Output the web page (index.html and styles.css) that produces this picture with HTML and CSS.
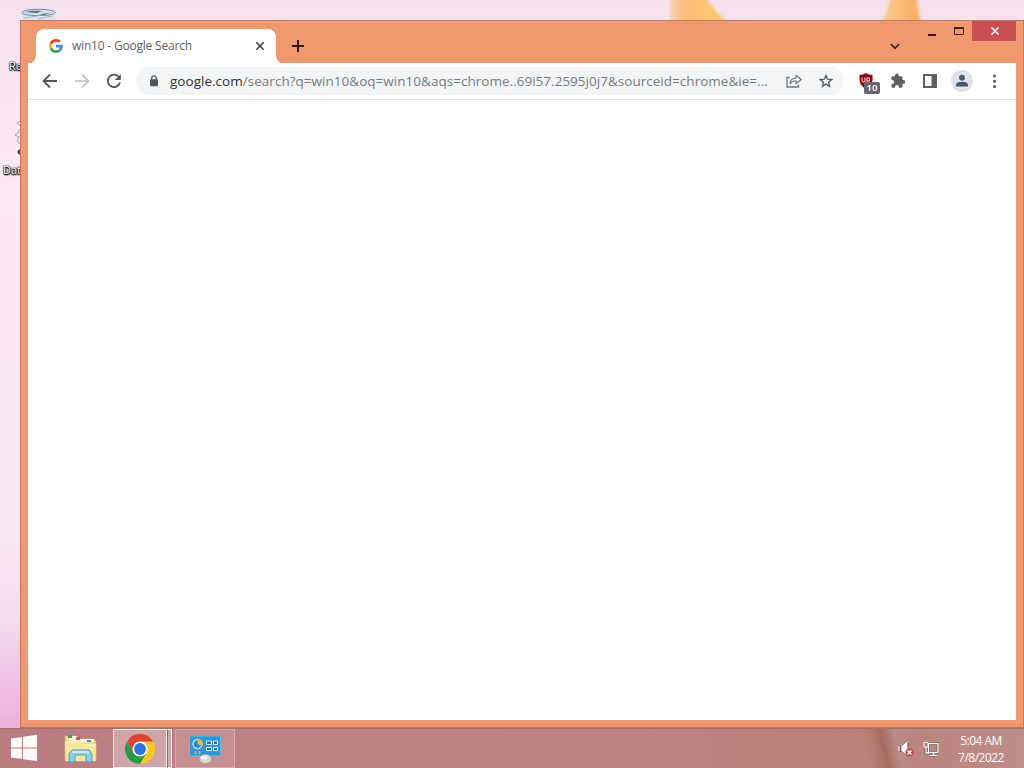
FILE: index.html
```html
<!DOCTYPE html>
<html lang="en">
<head>
<meta charset="utf-8">
<title>Desktop</title>
<link rel="stylesheet" href="styles.css">
</head>
<body>
<div class="desktop">
  <svg class="wallpaper" width="1024" height="768" viewBox="0 0 1024 768">
    <defs>
      <linearGradient id="petal" x1="0" x2="1"><stop offset="0" stop-color="#fbcfc0"/><stop offset=".25" stop-color="#fbbd7a"/><stop offset="1" stop-color="#fccb6c"/></linearGradient>
      <linearGradient id="petal2" x1="0" x2="1"><stop offset="0" stop-color="#fbcf98"/><stop offset="1" stop-color="#fba95e"/></linearGradient>
      <filter id="soft"><feGaussianBlur stdDeviation="1.5"/></filter>
    </defs>
    <g filter="url(#soft)"><path d="M670-5H704Q712 8 729 24H670Z" fill="url(#petal)"/><path d="M890-5H916Q918 10 921 24H880Q890 8 890-5Z" fill="url(#petal2)"/></g>
  </svg>
  <svg class="bin" width="38" height="14" viewBox="0 0 38 14"><path d="M1 4L3 14H33L36 4Z" fill="#dce5ee"/><ellipse cx="18.500" cy="4.500" rx="17" ry="3.200" fill="#d3e0ea" stroke="#7b8b9b"/><path d="M5 4Q15 2 22 3L17 5ZM19 6Q27 6 33 4L24 7Z" fill="#52677d"/><path d="M4 10L17 8M18 11L32 8" stroke="#9fb2c4"/></svg>
  <span class="label label-bin">Recycle Bin</span>
  <svg class="shortcut" width="8" height="36" viewBox="0 0 8 36"><path d="M6 1L3 3L6 6M6 9L4 13L1 15L5 17L3 21L6 24" fill="none" stroke="#aaa0aa"/><path d="M6 30Q3 32 6 34" fill="none" stroke="#333" stroke-width="2"/></svg>
  <span class="label label-data">Data</span>

  <main class="window">
    <header class="titlebar">
      <div class="tab">
        <svg width="14" height="14" viewBox="0 0 48 48"><path fill="#ea4335" d="M24 9.500c3.500 0 6.700 1.200 9.200 3.600l6.900-6.900C35.900 2.400 30.500 0 24 0 14.600 0 6.500 5.400 2.600 13.200l8 6.200C12.400 13.700 17.700 9.500 24 9.500z"/><path fill="#4285f4" d="M47 24.500c0-1.600-.2-3.100-.4-4.500H24v9h12.900c-.6 3-2.300 5.500-4.800 7.200l7.700 6C44.400 38 47 31.800 47 24.500z"/><path fill="#fbbc05" d="M10.500 28.600a14.500 14.500 0 010-9.200l-8-6.200a24 24 0 000 21.600z"/><path fill="#34a853" d="M24 48c6.500 0 11.900-2.100 15.900-5.800l-7.700-6c-2.200 1.500-4.900 2.300-8.200 2.300-6.300 0-11.600-4.200-13.500-9.900l-8 6.200C6.500 42.600 14.600 48 24 48z"/></svg>
        <span class="tab-title">win10 - Google Search</span>
        <svg width="10" height="10" viewBox="0 0 10 10"><path d="M1.300 1.300L8.700 8.700M8.700 1.300L1.300 8.700" stroke="#3c4043" stroke-width="1.500"/></svg>
      </div>
      <svg class="new-tab" width="12" height="12" viewBox="0 0 12 12"><path d="M6 0V12M0 6H12" stroke="#35150d" stroke-width="2"/></svg>
      <svg class="tab-menu" width="10" height="7" viewBox="0 0 10 7"><path d="M.8 1L5 5.200L9.200 1" fill="none" stroke="#4a1d10" stroke-width="1.700"/></svg>
      <div class="controls">
        <svg width="8" height="2"><path d="M0 0H8V2H0Z" fill="#35150d"/></svg>
        <svg class="maximize" width="10" height="8"><path d="M.5 1H9.500V7.500H.5Z" fill="none" stroke="#45200f"/><path d="M0 1H10" stroke="#45200f" stroke-width="2"/></svg>
        <div class="close"><svg width="8" height="8" viewBox="0 0 8 8"><path d="M.5.5L7.500 7.500M7.500.5L.5 7.500" stroke="#fff" stroke-width="1.500"/></svg></div>
      </div>
    </header>
    <section class="page">
      <nav class="toolbar">
        <svg class="tool" viewBox="0 0 16 16"><path d="M15 8H2M8 1.500L1.500 8L8 14.500" fill="none" stroke="#55585c" stroke-width="1.800"/></svg>
        <svg class="tool" viewBox="0 0 16 16"><path d="M1 8H14M8 1.500L14.500 8L8 14.500" fill="none" stroke="#bbbdbf" stroke-width="1.700"/></svg>
        <svg class="tool" viewBox="0 0 16 16"><path d="M13.300 4.600A6.200 6.200 0 1014 9.500" fill="none" stroke="#55585c" stroke-width="1.800"/><path d="M14.800 1V7H8.800Z" fill="#55585c"/></svg>
        <div class="omnibox">
          <svg class="lock" width="10" height="12" viewBox="0 0 10 12"><path d="M2.700 5V3.200a2.300 2.300 0 014.600 0V5" fill="none" stroke="#55585c" stroke-width="1.300"/><rect x="1" y="4.300" width="8" height="7" rx="1" fill="#55585c"/></svg>
          <span class="url"><b>google.com</b>/search?q=win10&amp;oq=win10&amp;aqs=chrome..69i57.2595j0j7&amp;sourceid=chrome&amp;ie=...</span>
          <svg class="share" width="16" height="14" viewBox="0 0 16 14"><path d="M3.500 3.500H1V13H12.500V10.500" fill="none" stroke="#74777b" stroke-width="1.300"/><path d="M4 9.500Q4.500 4.300 10 4V1.200L15.200 5.500L10 9.500V6.800Q6.500 6.500 4 9.500Z" fill="none" stroke="#74777b" stroke-width="1.200" stroke-linejoin="round"/></svg>
          <svg class="star" width="14" height="14" viewBox="0 0 14 14"><path d="M7 1.400L8.600 5.200L12.800 5.600L9.600 8.300L10.600 12.300L7 10.100L3.400 12.300L4.400 8.300L1.200 5.600L5.400 5.200Z" fill="none" stroke="#55585c" stroke-width="1.300"/></svg>
        </div>
        <div class="extension">
          <svg width="16" height="16" viewBox="0 0 16 16"><path d="M8 0Q11 2 14.500 2V7Q14 13 8 16Q2 13 1.500 7V2Q5 2 8 0Z" fill="#8d0713"/><path d="M4 4.500V8Q5.500 10 7 8V4.500M9 10V5H11.500V8H9" fill="none" stroke="#f5caca" stroke-width="1.100"/></svg>
          <span class="badge">10</span>
        </div>
        <svg class="tool" viewBox="0 0 16 16"><path d="M1.500 4.500Q1.500 3.200 2.800 3.200H5V2.400a1.900 1.900 0 013.800 0V3.200H11Q12.500 3.200 12.500 4.500V7H13.300a1.900 1.900 0 010 3.800H12.500V13.500Q12.500 14.800 11 14.800H9V14a2 2 0 00-4 0V14.800H2.800Q1.500 14.800 1.500 13.500V11H2.100a2 2 0 000-4H1.500Z" fill="#5d6064"/></svg>
        <svg class="tool" viewBox="0 0 16 16"><path d="M1 1H15V15H1ZM3 3V13H9.500V3Z" fill="#5d6064" fill-rule="evenodd"/></svg>
        <svg class="avatar" width="22" height="22" viewBox="0 0 22 22"><circle cx="11" cy="11" r="11" fill="#dfe2ea"/><circle cx="11" cy="7.700" r="2.900" fill="#51576a"/><path d="M5 16.500V14.800Q5 11.800 11 11.800T17 14.800V16.500Z" fill="#51576a"/></svg>
        <svg class="tool" viewBox="0 0 16 16"><g fill="#55585c"><circle cx="8.500" cy="3" r="1.500"/><circle cx="8.500" cy="8.200" r="1.500"/><circle cx="8.500" cy="13.400" r="1.500"/></g></svg>
      </nav>
    </section>
  </main>

  <footer class="taskbar">
    <svg class="start" width="28" height="28" viewBox="0 0 28 28"><path d="M1 4.500L12 3V13.500H1ZM13 2.800L27 .8V13.500H13ZM1 14.500H12V25L1 23.500ZM13 14.500H27V27L13 25.200Z" fill="#fffafa"/></svg>
    <svg class="folder" width="34" height="30" viewBox="0 0 34 30"><path d="M1 2H11L13 5H30L32 8V27H1Z" fill="#ecdc8c" stroke="#cfb969" stroke-width=".7"/><path d="M5 2H13L15 5H30V8H5Z" fill="#fff9dc"/><path d="M4 1h4v3H4z" fill="#4b9e5a"/><path d="M12 3h4v3h-4z" fill="#d15145"/><path d="M23 6h4v2h-4z" fill="#498ecc"/><path d="M1 7H18L21 10H32L31 27H2Z" fill="#f6e89b"/><path d="M2 8H17L20 11H32" fill="none" stroke="#fff8cd"/><path d="M5 28V20L8 16H25L28 20V28H22V21H11V28Z" fill="#8ccfea" stroke="#509fc5"/><path d="M8 18H25" stroke="#e1f6fb" stroke-width="1.500"/></svg>
    <div class="task task-active">
      <svg width="30" height="30" viewBox="0 0 30 30"><circle cx="15" cy="15" r="15" fill="#fcc629"/><path d="M2 7.500A15 15 0 0015 30L21.500 18.750L8.500 18.750Z" fill="#28994d"/><path d="M2 7.500A15 15 0 0128 7.500H15L8.500 18.750Z" fill="#dc4437"/><circle cx="15" cy="15" r="7.600" fill="#fff"/><circle cx="15" cy="15" r="5.900" fill="#2c72dd"/></svg>
    </div>
    <div class="stack"></div>
    <div class="task task-panel">
      <svg width="34" height="30" viewBox="0 0 34 30"><rect x="1.500" y="2" width="31" height="20" rx="1" fill="#3395d3" stroke="#68b9df"/><circle cx="9.500" cy="10" r="4.500" fill="#2588ca" stroke="#b8e2f2" stroke-width="1.400"/><path d="M9.500 10V4.500A5.500 5.500 0 0114 12Z" fill="#f0b748"/><path d="M18.500 7H23.500V10.500H18.500ZM25.500 7H29.500V10.500H25.500ZM18.500 13.500H23.500V16.500H18.500ZM25.500 13.500H29.500V16.500H25.500Z" fill="#2876b5" stroke="#d6edf5"/><path d="M7.500 17v3M11.500 17v3" stroke="#78c98e" stroke-width="2"/><ellipse cx="17.500" cy="25" rx="6" ry="4.500" fill="#d8d7d0" stroke="#a5a29e" stroke-width=".7"/><ellipse cx="16" cy="23.500" rx="3.500" ry="2" fill="#f5f4ee"/></svg>
    </div>
    <div class="tray">
      <svg width="16" height="16" viewBox="0 0 16 16"><path d="M1 5V10M4 5H5L9 1V14L5 10H4Z" fill="#fff" stroke="#fff"/><path d="M2.500 4V11M10 2V6" stroke="#704946"/><circle cx="11.500" cy="11.500" r="4.200" fill="#c34855"/><path d="M9.500 9.500L13.500 13.500M13.500 9.500L9.500 13.500" stroke="#fff" stroke-width="1.400"/></svg>
      <svg width="16" height="16" viewBox="0 0 16 16"><path d="M5.500 2.500H15V11.500H5.500ZM10.500 12V14.500M6 14.500H14M3 6V12H6" fill="none" stroke="#6f4c48" stroke-width="2.800"/><path d="M5.500 2.500H15V11.500H5.500ZM10.500 12V14.500M6 14.500H14M3 6V12H6" fill="none" stroke="#fff" stroke-width="1.300"/><path d="M1 1.500H5V6H1Z" fill="#a17874" stroke="#fff"/></svg>
      <div class="clock"><span>5:04 AM</span><span class="date">7/8/2022</span></div>
    </div>
  </footer>
</div>
</body>
</html>
```

FILE: styles.css
```css
* { box-sizing: border-box; }
body { margin: 0; font-family: "Open Sans", "Noto Sans", sans-serif; }
svg { display: block; flex: none; }
.desktop { position: relative; width: 1024px; height: 768px; overflow: hidden; background: linear-gradient(#f6e2ee 0, #fbe9f5 160px, #f8e8f3 540px, #f4dcee 620px, #edb2dc 720px); }
.wallpaper { position: absolute; inset: 0; }
.bin { position: absolute; left: 20px; top: 8px; }
.shortcut { position: absolute; left: 14px; top: 120px; }
.label { position: absolute; color: #fff; font-size: 11px; line-height: 14px; white-space: nowrap; text-shadow: 0 0 1px #000, 0 0 2px #000, 1px 1px 2px #000, 0 1px 1px #000; }
.label-bin { left: 9px; top: 59px; }
.label-data { left: 3px; top: 163px; }
.window { position: absolute; left: 20px; top: 20px; width: 1004px; height: 708px; padding: 0 7px 7px; background: #f0986f; border: 1px solid #c57860; border-bottom-color: #b87460; }
.titlebar { display: flex; height: 42px; align-items: flex-start; }
.tab { position: relative; display: flex; align-items: center; width: 240px; height: 35px; margin: 8px 0 0 8px; padding: 0 11px 1px 13px; border-radius: 8px 8px 0 0; background: #fff; }
.tab::before, .tab::after { content: ""; position: absolute; bottom: 0; width: 8px; height: 8px; }
.tab::before { left: -8px; background: radial-gradient(circle at 0 0, transparent 7.5px, #fff 8px); }
.tab::after { right: -8px; background: radial-gradient(circle at 100% 0, transparent 7.5px, #fff 8px); }
.tab-title { flex: 1; margin-left: 9px; padding-bottom: 1px; color: #5c5f63; font-size: 12px; letter-spacing: -.2px; white-space: nowrap; }
.new-tab { margin: 19px 0 0 16px; }
.tab-menu { margin: 22px 0 0 auto; }
.controls { display: flex; margin-left: 28px; }
.controls > svg { margin-top: 13px; }
.controls .maximize { margin: 6px 0 0 18px; }
.close { display: flex; justify-content: center; align-items: center; width: 44px; height: 20px; margin-left: 8px; padding-left: 2px; background: #c95052; }
.page { height: 657px; background: #fff; }
.toolbar { display: flex; align-items: center; height: 37px; padding: 0 14px; border-bottom: 1px solid #dee1e3; }
.tool { width: 16px; height: 16px; margin-right: 16px; }
.tool:last-child { margin-right: 0; }
.omnibox { display: flex; align-items: center; width: 708px; height: 28px; margin: 0 14px 0 -2px; padding: 0 11px 0 13px; border-radius: 14px; background: #f3f5f6; }
.url { flex: 1; margin-left: 11px; color: #777b7f; font-size: 13.5px; letter-spacing: .025px; white-space: nowrap; }
.url b { color: #303235; font-weight: 400; }
.share { margin-right: 17px; }
.extension { position: relative; width: 16px; margin-right: 16px; }
.badge { position: absolute; left: 6px; top: 9px; width: 16px; height: 12px; border-radius: 2px; background: #65686a; color: #fff; font-size: 9.5px; font-weight: 600; line-height: 12px; text-align: center; }
.avatar { margin: 0 13px 0 -3px; }
.taskbar { position: absolute; left: 0; bottom: 0; display: flex; width: 1024px; height: 40px; padding-left: 10px; background: linear-gradient(78deg, transparent 852px, #ad7668 864px, #a36a5d 869px, #bb8b85 882px, transparent 900px), linear-gradient(90deg, #b87c81 0, #be8284 24%, #bb827d 70%, #b98078 83%, #bd8d88 100%); border-top: 1px solid #a87069; }
.start { margin-top: 5px; }
.folder { margin: 5px 0 0 26px; }
.task { display: flex; justify-content: center; align-items: center; height: 39px; }
.task-active { width: 54px; margin-left: 15px; padding-right: 1px; background: #cfa5a7; border: 1px solid #fff1ef; }
.stack { width: 5px; height: 39px; background: #d0aaab; border: 1px solid #fff1ef; border-left-color: #8d6260; }
.task-panel { width: 60px; margin-left: 3px; background: #c58e91; border: 1px solid #d8aaa8; }
.tray { display: flex; align-items: center; margin: 0 19px 0 auto; }
.tray > svg:first-child { margin-right: 9px; }
.clock { display: flex; flex-direction: column; align-items: center; width: 48px; margin-left: 18px; color: #fff; font-size: 12px; line-height: 17px; letter-spacing: -.5px; white-space: nowrap; }
```
